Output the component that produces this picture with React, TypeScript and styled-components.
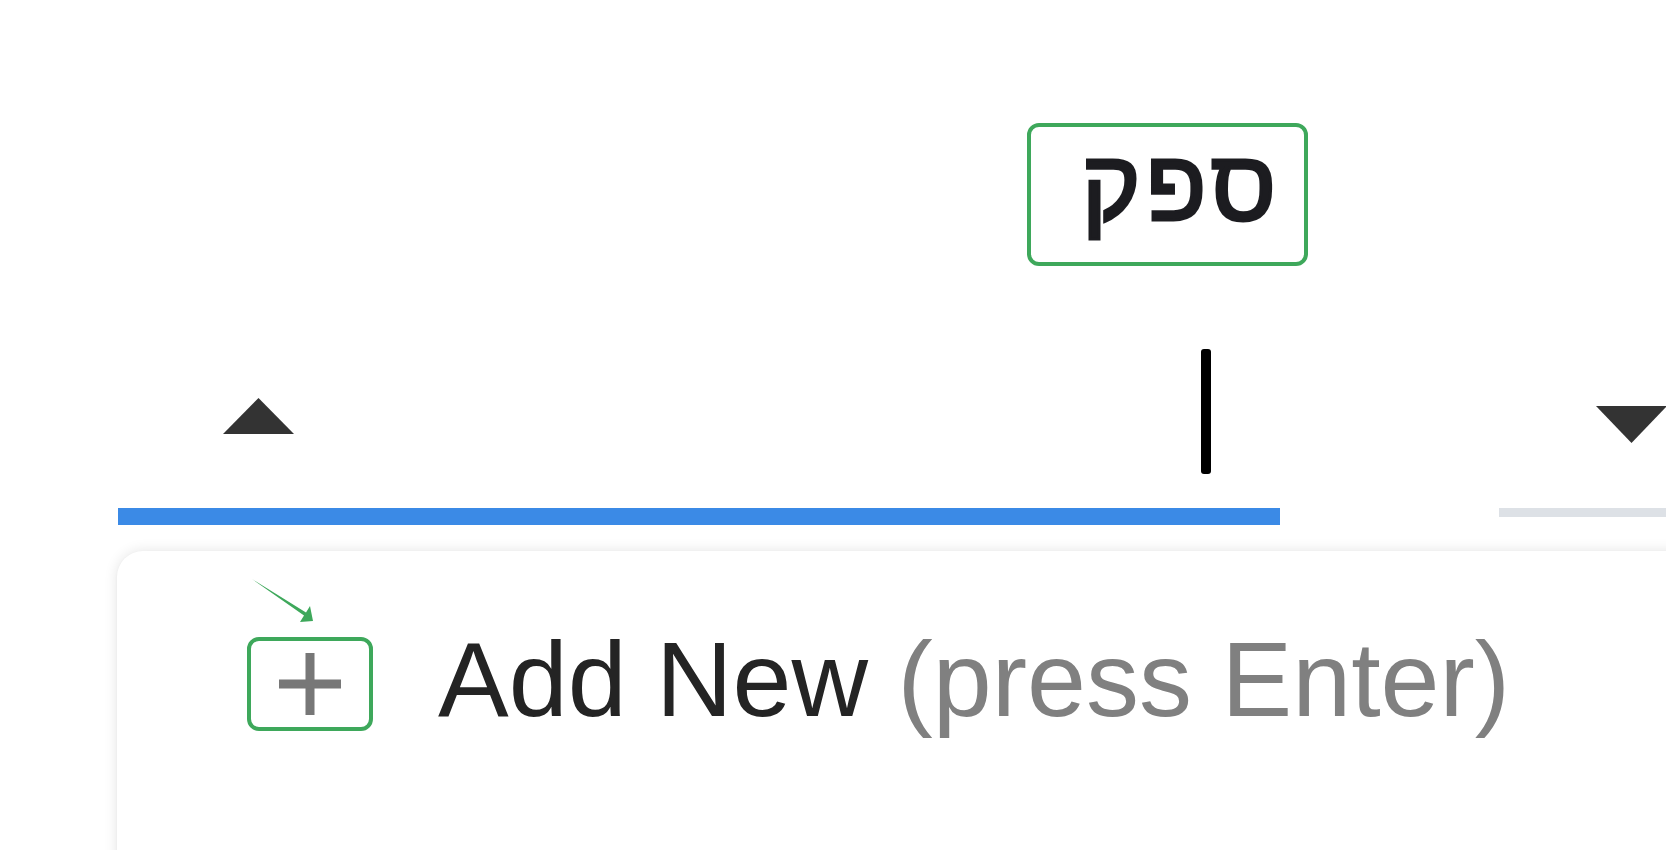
import React from "react";
import styled, { createGlobalStyle } from "styled-components";

const Global = createGlobalStyle`
  html, body { margin: 0; padding: 0; background: #ffffff; }
  body { font-family: "Liberation Sans", Arial, sans-serif; overflow: hidden; }
`;

const Page = styled.div`
  width: 1666px;
  height: 850px;
  overflow: hidden;
  position: relative;
  background: #ffffff;
`;

const LabelRow = styled.div`
  display: flex;
  padding-top: 123px;
  padding-left: 1027px;
`;

const LabelBox = styled.div`
  box-sizing: border-box;
  width: 281px;
  height: 143px;
  border: 4px solid #3ea85b;
  border-radius: 12px;
  display: flex;
  align-items: center;
  justify-content: flex-start;
  direction: rtl;
  padding-right: 23px;
`;

const LabelText = styled.span`
  font-family: "Liberation Sans", Arial, sans-serif;
  font-weight: 400;
  font-size: 100px;
  line-height: 1;
  letter-spacing: 5px;
  color: #1c1c20;
  -webkit-text-stroke: 3px #1c1c20;
  margin-bottom: 20px;
`;

const FieldsRow = styled.div`
  display: flex;
  align-items: flex-start;
  padding-left: 118px;
  gap: 219px;
`;

const Field = styled.div<{ $width: number }>`
  display: flex;
  flex-direction: column;
  width: ${(p) => p.$width}px;
  flex-shrink: 0;
`;

const FieldContent = styled.div`
  height: 242px;
  display: flex;
  align-items: flex-start;
`;

const Underline = styled.div<{ $color: string; $thick: number }>`
  height: ${(p) => p.$thick}px;
  background: ${(p) => p.$color};
`;

const Triangle = styled.svg<{ $left: number; $top: number }>`
  display: block;
  margin-left: ${(p) => p.$left}px;
  margin-top: ${(p) => p.$top}px;
  flex-shrink: 0;
`;

const Caret = styled.div<{ $left: number; $top: number }>`
  width: 10px;
  height: 125px;
  background: #000000;
  border-radius: 3px;
  margin-left: ${(p) => p.$left}px;
  margin-top: ${(p) => p.$top}px;
  flex-shrink: 0;
`;

const Card = styled.div`
  position: relative;
  margin-left: 117px;
  margin-top: 26px;
  width: 1700px;
  height: 600px;
  background: #ffffff;
  border-radius: 26px;
  box-shadow: 0 0 14px rgba(0, 0, 0, 0.11), 0 1px 3px rgba(0, 0, 0, 0.04);
  padding: 68px 0 0 130px;
  box-sizing: border-box;
`;

const Option = styled.div`
  display: flex;
  align-items: center;
  gap: 65px;
`;

const IconBox = styled.div`
  box-sizing: border-box;
  width: 126px;
  height: 94px;
  border: 4px solid #3ea85b;
  border-radius: 12px;
  display: flex;
  align-items: center;
  justify-content: center;
  flex-shrink: 0;
`;

const OptionText = styled.span`
  font-family: "Liberation Sans", Arial, sans-serif;
  font-size: 106px;
  line-height: 1.15;
  color: #242424;
  white-space: nowrap;
  margin-bottom: 8px;
`;

const Hint = styled.span`
  color: #808080;
`;

const Annotation = styled.svg`
  position: absolute;
  left: 130px;
  top: 24px;
`;

export default function App() {
  return (
    <Page>
      <Global />
      <LabelRow>
        <LabelBox>
          <LabelText>ספק</LabelText>
        </LabelBox>
      </LabelRow>
      <FieldsRow>
        <Field $width={1162}>
          <FieldContent>
            <Triangle $left={105} $top={132} width="71" height="36" viewBox="0 0 71 36">
              <polygon points="35.5,0 71,36 0,36" fill="#333333" />
            </Triangle>
            <Caret $left={907} $top={83} />
          </FieldContent>
          <Underline $color="#3b8ae6" $thick={17} />
        </Field>
        <Field $width={300}>
          <FieldContent>
            <Triangle $left={97} $top={140} width="71" height="37" viewBox="0 0 71 37">
              <polygon points="0,0 71,0 35.5,37" fill="#333333" />
            </Triangle>
          </FieldContent>
          <Underline $color="#dde1e6" $thick={9} />
        </Field>
      </FieldsRow>
      <Card>
        <Annotation width="70" height="50" viewBox="0 0 70 50">
          <polygon points="5,4 59,37.5 63,31 66,46 53,47 57,40.5" fill="#3ea85b" />
        </Annotation>
        <Option>
          <IconBox>
            <svg width="62" height="62" viewBox="0 0 62 62">
              <rect x="26.5" y="0" width="9" height="62" fill="#777777" />
              <rect x="0" y="26.5" width="62" height="9" fill="#777777" />
            </svg>
          </IconBox>
          <OptionText>
            Add New <Hint>(press Enter)</Hint>
          </OptionText>
        </Option>
      </Card>
    </Page>
  );
}
